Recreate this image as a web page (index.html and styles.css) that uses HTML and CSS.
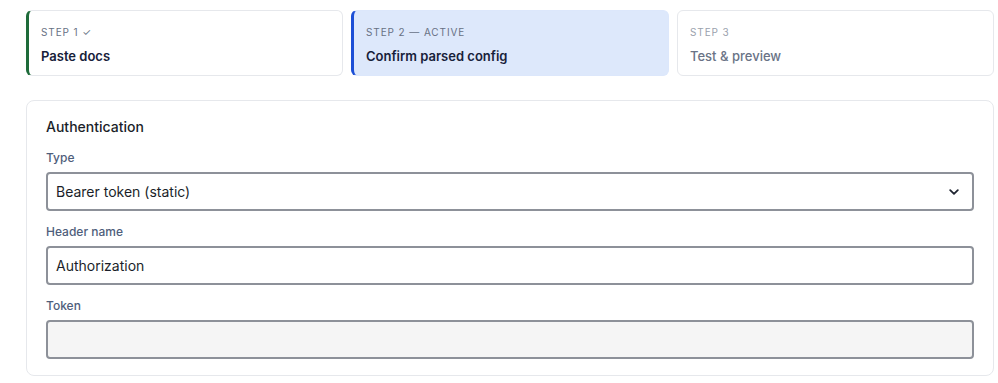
FILE: index.html
```html
<!DOCTYPE html>
<html>
<head>
<meta charset="utf-8">
<link rel="stylesheet" href="styles.css">
</head>
<body>
<div class="page">
  <div class="steps">
    <div class="step step-done">
      <div class="step-label">STEP 1 ✓</div>
      <div class="step-title">Paste docs</div>
    </div>
    <div class="step step-active">
      <div class="step-label">STEP 2 — ACTIVE</div>
      <div class="step-title">Confirm parsed config</div>
    </div>
    <div class="step step-todo">
      <div class="step-label">STEP 3</div>
      <div class="step-title">Test &amp; preview</div>
    </div>
  </div>
  <div class="panel">
    <div class="panel-title">Authentication</div>
    <div class="field">
      <div class="label">Type</div>
      <div class="control select">
        <span>Bearer token (static)</span>
        <svg class="chev" width="10" height="6" viewBox="0 0 10 6"><path d="M1.2 1.2 L5 4.8 L8.8 1.2" fill="none" stroke="#1f2430" stroke-width="1.8" stroke-linecap="round" stroke-linejoin="round"/></svg>
      </div>
    </div>
    <div class="field">
      <div class="label">Header name</div>
      <div class="control">Authorization</div>
    </div>
    <div class="field">
      <div class="label">Token</div>
      <div class="control disabled"></div>
    </div>
  </div>
</div>
</body>
</html>
```
FILE: styles.css
```css
* { box-sizing: border-box; }
body {
  margin: 0;
  background: #ffffff;
  font-family: Inter, "Noto Sans", sans-serif;
  color: #1c2333;
}
.page {
  padding: 10px 4px 0 26px;
}
.steps {
  display: grid;
  grid-template-columns: 317px 318px 317px;
  gap: 8px;
}
.step {
  height: 66px;
  border: 1px solid #e6e8ec;
  border-radius: 6px;
  padding: 13px 12px 0 12px;
  background: #fff;
}
.step-done { border-left: 3px solid #1e6b3a; }
.step-active { border-color: #dce7fb; border-left: 3px solid #1c4fd6; background: #dde8fb; }
.step-label {
  font-size: 10px;
  line-height: 16px;
  letter-spacing: 0.9px;
  color: #687184;
}
.step-title {
  margin-top: 6px;
  font-size: 13px;
  line-height: 20px;
  font-weight: 600;
  color: #17213a;
}
.step-todo .step-label { color: #9aa1ad; }
.step-todo .step-title { color: #6a7386; font-weight: 500; }
.panel {
  margin-top: 24px;
  width: 968px;
  border: 1px solid #e6e8ec;
  border-radius: 8px;
  padding: 16px 19px;
}
.panel-title {
  font-size: 14px;
  line-height: 20px;
  font-weight: 500;
  color: #1b1f2a;
  margin-bottom: 13px;
}
.field + .field { margin-top: 13px; }
.label {
  font-size: 12px;
  line-height: 16px;
  font-weight: 500;
  color: #4f5e7b;
  margin-bottom: 6px;
}
.control {
  height: 39px;
  border: 2px solid #8d9199;
  border-radius: 4px;
  padding: 0 8px;
  display: flex;
  align-items: center;
  font-size: 14px;
  color: #1b1f2a;
  background: #fff;
}
.select { justify-content: space-between; padding-right: 13px; }
.chev { display: block; }
.disabled { background: #f5f5f5; }
```
